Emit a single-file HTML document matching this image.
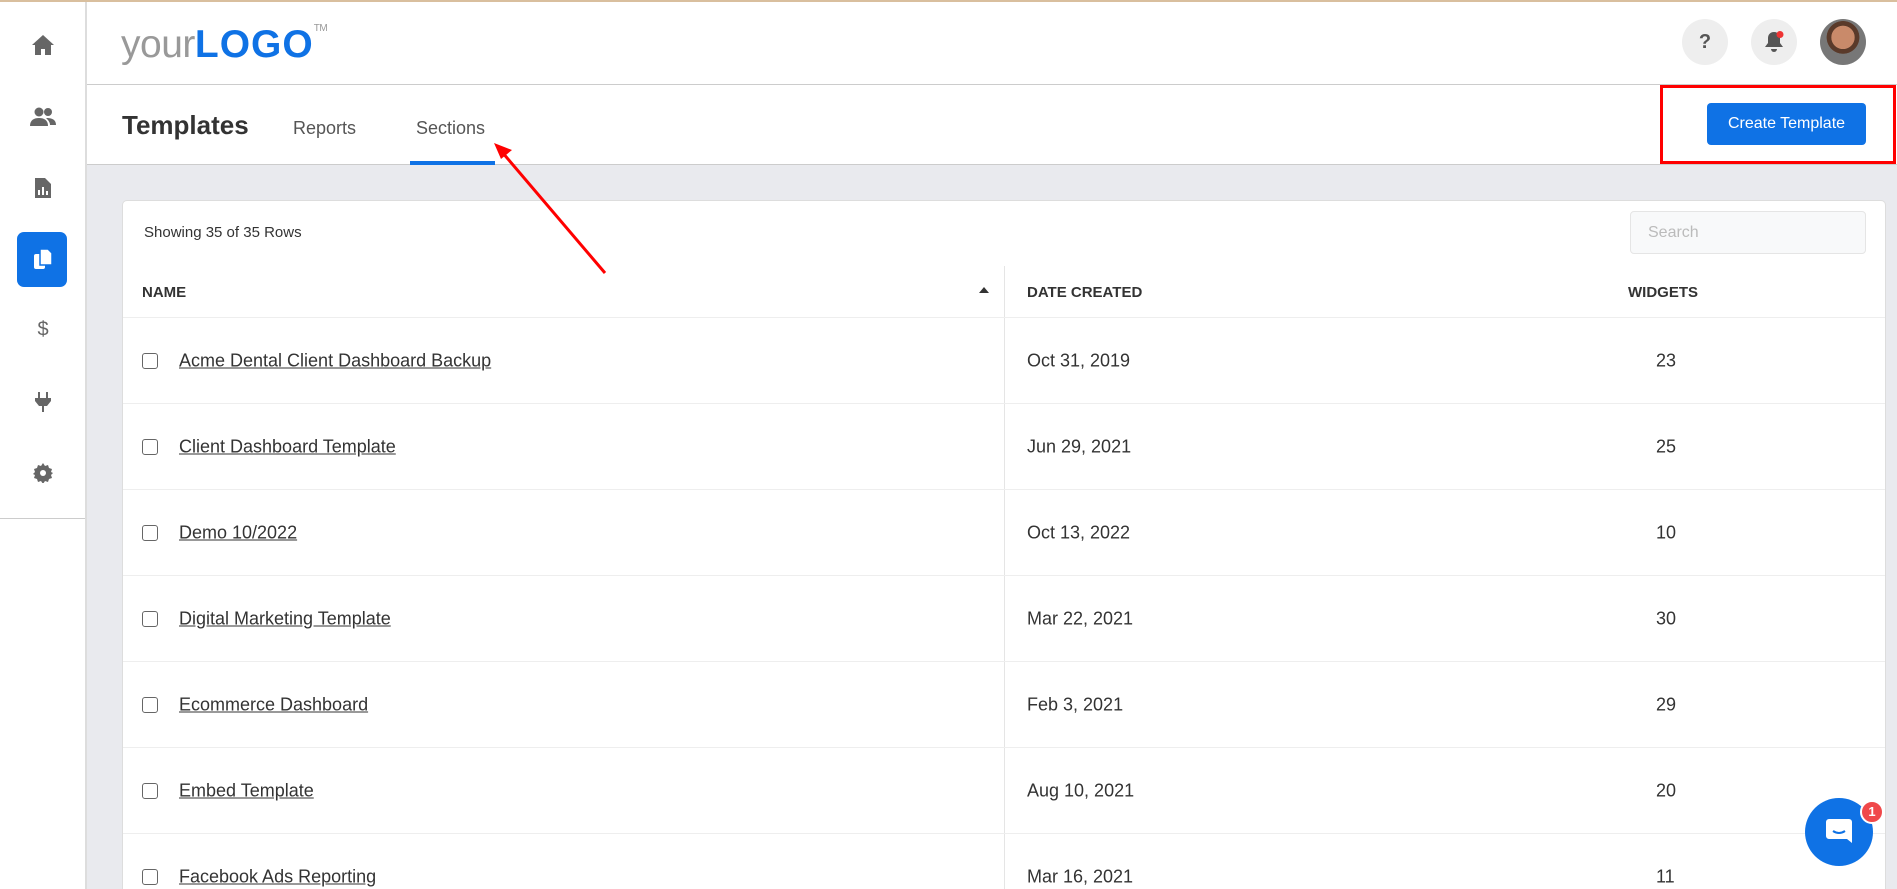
<!DOCTYPE html>
<html style="width:1897px;height:889px;overflow:hidden"><head><meta charset="utf-8"><style>
*{box-sizing:border-box;margin:0;padding:0}
body{width:1897px;height:889px;overflow:hidden;font-family:"Liberation Sans",Arial,sans-serif;background:#e9eaee;position:relative;color:#333}
.topline{position:absolute;left:0;top:0;width:1897px;height:2px;background:#d9bf9e;z-index:5}
.side{position:absolute;left:0;top:0;width:87px;height:889px;background:#fff;border-right:2px solid #ddd}
.side .ic{position:absolute;left:43px;transform:translate(-50%,-50%);color:#666}
.side .div{position:absolute;left:0;top:518px;width:85px;height:1px;background:#ccc}
.active{position:absolute;left:17px;top:232px;width:50px;height:55px;background:#0f72e5;border-radius:7px}
.header{position:absolute;left:87px;top:0;right:0;height:85px;background:#fff;border-bottom:1px solid #ccc}
.tabs{position:absolute;left:87px;top:85px;right:0;height:80px;background:#fff;border-bottom:1px solid #ccc}
.circ{position:absolute;width:46px;height:46px;border-radius:50%;background:#eee;top:19px}
.card{position:absolute;left:122px;top:200px;width:1764px;height:689px;overflow:hidden;background:#fff;border:1px solid #ddd;border-bottom:none;border-radius:5px 5px 0 0}
.row{position:absolute;left:0;width:1762px;height:86px;border-top:1px solid #eee;font-size:18px;color:#333}
.row span{position:absolute;top:50%;transform:translateY(-50%)}
.cb{position:absolute;left:19px;top:50%;margin-top:-8px;width:16px;height:16px;border:1.5px solid #666;border-radius:3px}
.nm{left:56px;text-decoration:underline}
.dt{left:904px}
.wd{left:1533px}
.th{position:absolute;top:83px;font-size:15px;font-weight:bold;color:#333}
</style></head><body>
<div class="topline"></div>
<div class="side">
 <svg class="ic" style="top:45px" width="24" height="22" viewBox="0 0 24 22"><path d="M12 1L1 11h3v10h6v-6h4v6h6V11h3z" fill="#666"/></svg>
 <svg class="ic" style="top:117px" width="26" height="20" viewBox="0 0 26 20"><circle cx="9" cy="5" r="4.5" fill="#666"/><circle cx="18" cy="5" r="4" fill="#666"/><path d="M0 19c0-6 4-8 9-8s9 2 9 8z" fill="#666"/><path d="M16 11c5 0 10 1 10 7h-6c0-3-2-5-4-7z" fill="#666"/></svg>
 <svg class="ic" style="top:188px" width="16" height="20" viewBox="0 0 16 20"><path d="M0 0h10l6 6v14H0z" fill="#666"/><rect x="3" y="12" width="2" height="5" fill="#fff"/><rect x="7" y="9" width="2" height="8" fill="#fff"/><rect x="11" y="13" width="2" height="4" fill="#fff"/></svg>
 <div class="active"></div>
 <svg class="ic" style="top:259px" width="20" height="22" viewBox="0 0 20 22"><rect x="1" y="6" width="11" height="15" rx="2" fill="#fff"/><path d="M7 1h8l4 4v12H7z" fill="#fff" stroke="#0f72e5" stroke-width="1.5"/></svg>
 <div class="ic" style="top:330px;font-size:20px;color:#666">$</div>
 <svg class="ic" style="top:402px" width="16" height="20" viewBox="0 0 16 20"><rect x="3" y="0" width="2" height="6" fill="#666"/><rect x="11" y="0" width="2" height="6" fill="#666"/><path d="M0 6h16v3l-4 5h-3v6H7v-6H4L0 9z" fill="#666"/></svg>
 <svg class="ic" style="top:473px" width="20" height="20" viewBox="0 0 20 20"><path d="M10 0l2 3 3-1 1 3 3 1-1 3 2 1-2 2 1 3-3 1-1 3-3-1-2 3-2-3-3 1-1-3-3-1 1-3-2-1 2-2-1-3 3-1 1-3 3 1z" fill="#666"/><circle cx="10" cy="10" r="3" fill="#fff"/></svg>
 <div class="div"></div>
</div>
<div class="header">
 <div style="position:absolute;left:34px;top:18px;font-size:39px;letter-spacing:-0.5px;line-height:46px;white-space:nowrap"><span style="color:#999">your</span><span style="color:#0f72e5;font-weight:bold;letter-spacing:1px">LOGO</span><sup style="font-size:10px;color:#999;position:relative;top:-12px">TM</sup></div>
 <div class="circ" style="left:1595px;font-weight:bold;font-size:20px;color:#555;text-align:center;line-height:46px">?</div>
 <div class="circ" style="left:1664px"><svg style="position:absolute;left:13px;top:12px" width="20" height="22" viewBox="0 0 20 22"><path d="M10 1c-4 0-6 3-6 6v5l-3 4h18l-3-4V7c0-3-2-6-6-6z" fill="#555"/><path d="M7 18a3 3 0 0 0 6 0z" fill="#555"/><circle cx="16" cy="3.5" r="3.5" fill="#e33"/></svg></div>
 <div style="position:absolute;left:1733px;top:19px;width:46px;height:46px;border-radius:50%;background:radial-gradient(circle at 50% 40%,#c98a6a 0 32%,#5a3a2a 33% 45%,#777 46% 100%)"></div>
</div>
<div class="tabs">
 <div style="position:absolute;left:35px;top:25px;font-size:26px;font-weight:bold;color:#333">Templates</div>
 <div style="position:absolute;left:206px;top:33px;font-size:18px;color:#555">Reports</div>
 <div style="position:absolute;left:329px;top:33px;font-size:18px;color:#555">Sections</div>
 <div style="position:absolute;left:323px;top:76px;width:85px;height:4px;background:#0f72e5"></div>
 <div style="position:absolute;left:1573px;top:0;width:236px;height:79px;border:3px solid #f00"></div>
 <div style="position:absolute;left:1620px;top:18px;width:159px;height:42px;background:#0f72e5;border-radius:4px;color:#fff;font-size:16px;text-align:center;line-height:42px">Create Template</div>
</div>
<div class="card">
 <div style="position:absolute;left:21px;top:23px;font-size:15px;color:#333">Showing 35 of 35 Rows</div>
 <div style="position:absolute;left:1507px;top:10px;width:236px;height:43px;border:1px solid #e5e5e5;border-radius:4px;background:#f8f9fa;color:#bbb;font-size:16px;line-height:41px;padding-left:17px">Search</div>
 <div class="th" style="left:19px">NAME</div>
 <div style="position:absolute;left:856px;top:86px;width:0;height:0;border-left:5px solid transparent;border-right:5px solid transparent;border-bottom:6px solid #333"></div>
 <div class="th" style="left:904px">DATE CREATED</div>
 <div class="th" style="left:1505px">WIDGETS</div>
 <div style="position:absolute;left:881px;top:65px;width:1px;height:624px;background:#e5e5e5"></div>
 <div class="row" style="top:116px"><div class="cb"></div><span class="nm">Acme Dental Client Dashboard Backup</span><span class="dt">Oct 31, 2019</span><span class="wd">23</span></div>
 <div class="row" style="top:202px"><div class="cb"></div><span class="nm">Client Dashboard Template</span><span class="dt">Jun 29, 2021</span><span class="wd">25</span></div>
 <div class="row" style="top:288px"><div class="cb"></div><span class="nm">Demo 10/2022</span><span class="dt">Oct 13, 2022</span><span class="wd">10</span></div>
 <div class="row" style="top:374px"><div class="cb"></div><span class="nm">Digital Marketing Template</span><span class="dt">Mar 22, 2021</span><span class="wd">30</span></div>
 <div class="row" style="top:460px"><div class="cb"></div><span class="nm">Ecommerce Dashboard</span><span class="dt">Feb 3, 2021</span><span class="wd">29</span></div>
 <div class="row" style="top:546px"><div class="cb"></div><span class="nm">Embed Template</span><span class="dt">Aug 10, 2021</span><span class="wd">20</span></div>
 <div class="row" style="top:632px;height:57px"><div class="cb" style="top:43px"></div><span class="nm" style="top:43px">Facebook Ads Reporting</span><span class="dt" style="top:43px">Mar 16, 2021</span><span class="wd" style="top:43px">11</span></div>
</div>
<svg style="position:absolute;left:0;top:0" width="1897" height="889"><line x1="605" y1="273" x2="502" y2="152" stroke="#f00" stroke-width="3"/><path d="M494 143l18 7-11 9z" fill="#f00"/></svg>
<div style="position:absolute;left:1805px;top:798px;width:68px;height:68px;border-radius:50%;background:#0f72e5"><svg style="position:absolute;left:20px;top:19px" width="28" height="28" viewBox="0 0 28 28"><path d="M4 2h20a3 3 0 0 1 3 3v21l-5-4H4a3 3 0 0 1-3-3V5a3 3 0 0 1 3-3z" fill="#fff"/><path d="M8 14q6 4 12 0" stroke="#0f72e5" stroke-width="2" fill="none"/></svg></div>
<div style="position:absolute;left:1860px;top:800px;width:24px;height:24px;border-radius:50%;background:#f0484a;border:2px solid #fff;color:#fff;font-size:13px;font-weight:bold;text-align:center;line-height:20px">1</div>
</body></html>
